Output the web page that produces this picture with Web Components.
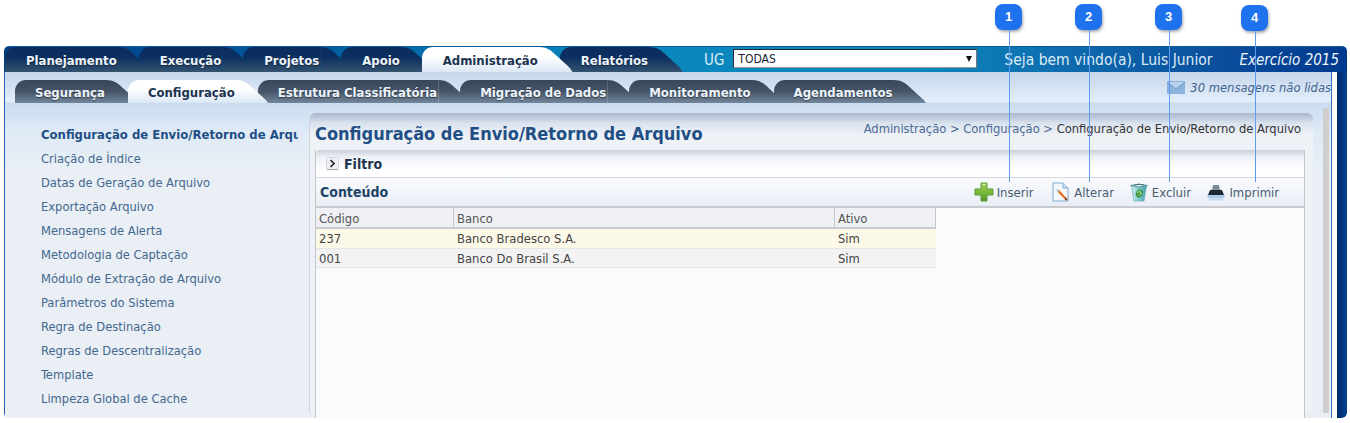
<!DOCTYPE html>
<html lang="pt-BR">
<head>
<meta charset="utf-8">
<title>Configuração de Envio/Retorno de Arquivo</title>
<style>
  html, body { margin: 0; background: #fff; overflow: hidden; }
  body {
    position: relative;
    width: 1350px;
    height: 423px;
    padding-top: 46px;
    box-sizing: border-box;
    font-family: "DejaVu Sans Condensed", "DejaVu Sans", sans-serif;
    font-stretch: condensed;
  }
</style>
</head>
<body>
<x-app>
  <x-tab-strip slot="main-tabs" kind="main">
    <x-tab>Planejamento</x-tab>
    <x-tab>Execução</x-tab>
    <x-tab>Projetos</x-tab>
    <x-tab>Apoio</x-tab>
    <x-tab active>Administração</x-tab>
    <x-tab>Relatórios</x-tab>
  </x-tab-strip>
  <x-user-info slot="user"></x-user-info>

  <x-tab-strip slot="sub-tabs" kind="sub">
    <x-tab>Segurança</x-tab>
    <x-tab active>Configuração</x-tab>
    <x-tab>Estrutura Classificatória</x-tab>
    <x-tab>Migração de Dados</x-tab>
    <x-tab>Monitoramento</x-tab>
    <x-tab>Agendamentos</x-tab>
  </x-tab-strip>
  <x-messages slot="messages">30 mensagens não lidas</x-messages>

  <x-side-menu slot="menu">
    <x-menu-item active>Configuração de Envio/Retorno de Arquivo</x-menu-item>
    <x-menu-item>Criação de Índice</x-menu-item>
    <x-menu-item>Datas de Geração de Arquivo</x-menu-item>
    <x-menu-item>Exportação Arquivo</x-menu-item>
    <x-menu-item>Mensagens de Alerta</x-menu-item>
    <x-menu-item>Metodologia de Captação</x-menu-item>
    <x-menu-item>Módulo de Extração de Arquivo</x-menu-item>
    <x-menu-item>Parâmetros do Sistema</x-menu-item>
    <x-menu-item>Regra de Destinação</x-menu-item>
    <x-menu-item>Regras de Descentralização</x-menu-item>
    <x-menu-item>Template</x-menu-item>
    <x-menu-item>Limpeza Global de Cache</x-menu-item>
  </x-side-menu>

  <x-content-panel slot="content" heading="Configuração de Envio/Retorno de Arquivo">
    <span slot="crumbs">Administração &gt; Configuração &gt; <b>Configuração de Envio/Retorno de Arquivo</b></span>
    <x-tool-button slot="tools" icon="plus">Inserir</x-tool-button>
    <x-tool-button slot="tools" icon="edit">Alterar</x-tool-button>
    <x-tool-button slot="tools" icon="trash">Excluir</x-tool-button>
    <x-tool-button slot="tools" icon="print">Imprimir</x-tool-button>
    <x-data-row kind="head"><span>Código</span><span>Banco</span><span>Ativo</span></x-data-row>
    <x-data-row kind="selected"><span>237</span><span>Banco Bradesco S.A.</span><span>Sim</span></x-data-row>
    <x-data-row kind="alt"><span>001</span><span>Banco Do Brasil S.A.</span><span>Sim</span></x-data-row>
  </x-content-panel>
</x-app>

<x-callout style="left:995px;top:4px" drop="152">1</x-callout>
<x-callout style="left:1075px;top:4px" drop="152">2</x-callout>
<x-callout style="left:1155px;top:4px" drop="152">3</x-callout>
<x-callout style="left:1241px;top:5px" drop="151">4</x-callout>

<script>
// Small helper: every element gets its own open shadow root
const shadow = (el, html) => {
  el.attachShadow({ mode: 'open' }).innerHTML = html
}

customElements.define('x-app', class extends HTMLElement {
  constructor () {
    super()
    shadow(this, `
      <style>
        :host { display: block; width: 1343px; height: 372px; margin-left: 4px; }
        #frame { height: 100%; display: flex; flex-direction: column; border-radius: 5px; overflow: hidden; }
        #top {
          flex: 0 0 26px; display: flex; padding-left: 1px;
          background: linear-gradient(90deg, #003f86 0%, #005a9e 22%, #0a87bd 45%, #0a87bd 68%, #0f6eaf 78%, #0a4a9a 92%, #003a8e 100%);
          border-top: 1px solid #0a5a9e; box-sizing: border-box;
        }
        #body { flex: 1; display: flex; min-height: 0; }
        #panel {
          flex: 0 0 1328px; display: flex; flex-direction: column; min-height: 0; box-sizing: border-box;
          border-left: 1px solid #2a64b4; border-right: 1px solid #3a74c8;
          background: linear-gradient(#c4d7ec 0, #e4eef9 30px, #c9dcf0 31px, #dfeaf6 60px, #e9eff5 100px);
        }
        #tabs { flex: 0 0 31px; display: flex; justify-content: space-between; box-sizing: border-box; padding: 8px 0 0 10px; }
        #work { flex: 1; display: flex; min-height: 0; }
        #side { flex: 0 0 auto; }
        #main { flex: 1; min-width: 0; }
        #gutter { flex: 0 0 5px; background: #fff; }
        #navy { flex: 0 0 10px; background: linear-gradient(90deg, #002a68, #00418f); border-bottom-right-radius: 5px; }
      </style>
      <div id="frame">
        <div id="top"><slot name="main-tabs"></slot><slot name="user"></slot></div>
        <div id="body">
          <div id="panel">
            <div id="tabs"><slot name="sub-tabs"></slot><slot name="messages"></slot></div>
            <div id="work">
              <div id="side"><slot name="menu"></slot></div>
              <div id="main"><slot name="content"></slot></div>
            </div>
          </div>
          <div id="gutter"></div>
          <div id="navy"></div>
        </div>
      </div>`)
  }
})

customElements.define('x-tab-strip', class extends HTMLElement {
  constructor () {
    super()
    shadow(this, `
      <style>
        :host { display: flex; align-items: flex-end; }
      </style>
      <slot></slot>`)
  }

  connectedCallback () {
    const tabs = [...this.children]
    tabs.forEach((tab, i) => {
      tab.setAttribute('kind', this.getAttribute('kind'))
      // Earlier tab lies over the next one, the active one over all
      tab.style.zIndex = tab.hasAttribute('active') ? 20 : 10 - i
    })
  }
})

customElements.define('x-tab', class extends HTMLElement {
  constructor () {
    super()
    shadow(this, `
      <style>
        :host {
          --tab-bg: linear-gradient(#0b2d5e, #0a2f60 40%, #35536f);
          --tab-fg: #eef4fb;
          display: block; position: relative; height: 25px;
          margin-right: -13px; font-weight: bold; font-size: 13px;
        }
        :host([kind=sub]) { --tab-bg: linear-gradient(#38465a, #465569 50%, #72869c); height: 23px; margin-right: -12px; }
        :host([active]) { --tab-bg: linear-gradient(#fff, #fff 40%, #dbe7f5); --tab-fg: #1c3350; }
        #shape { display: flex; height: 100%; }
        #face {
          background: var(--tab-bg); color: var(--tab-fg);
          padding: 0 1px 0 21px; line-height: 28px; border-top-left-radius: 11px;
          white-space: nowrap;
        }
        :host([kind=sub]) #face { line-height: 25px; padding-left: 20px; }
        :host(:not([active])) #face { text-shadow: 0 1px 1px rgba(0, 0, 0, .45); }
        #slope {
          width: 34px; background: var(--tab-bg);
          clip-path: path('M0 0 C8 0 12 3 17 8 L28 18 C31 21 33 23 34 26 L0 26 Z');
        }
      </style>
      <div id="shape"><div id="face"><slot></slot></div><div id="slope"></div></div>`)
  }
})

customElements.define('x-user-info', class extends HTMLElement {
  constructor () {
    super()
    shadow(this, `
      <style>
        :host { display: flex; align-items: center; flex: 1; height: 25px; position: relative; z-index: 30; color: #dcebf8; white-space: nowrap; }
        #ug { position: relative; font-size: 15px; margin-left: 34px; }
        #select {
          width: 244px; height: 19px; margin-left: 9px; margin-top: -2px; box-sizing: border-box; background: #fff;
          border: 1px solid #2b2b2b; border-right-color: #777; border-bottom-color: #999;
          display: flex; justify-content: space-between; align-items: center; padding: 0 4px;
          color: #223; font-size: 12px;
        }
        #arrow { width: 0; height: 0; border: 3.5px solid transparent; border-top: 6px solid #111; border-bottom: 0; }
        #hello { font-size: 15.5px; margin-left: 27px; }
        #year { font-size: 15px; font-style: italic; margin-left: auto; margin-right: 8px; color: #eef5fc; }
      </style>
      <span id="ug">UG</span>
      <div id="select"><span>TODAS</span><span id="arrow"></span></div>
      <span id="hello">Seja bem vindo(a), Luis Junior</span>
      <span id="year">Exercício 2015</span>`)
  }
})

customElements.define('x-messages', class extends HTMLElement {
  constructor () {
    super()
    shadow(this, `
      <style>
        :host { display: flex; align-items: center; gap: 5px; height: 15px; font-size: 12.85px; font-style: italic; color: #43648f; white-space: nowrap; overflow: hidden; }
        svg { flex: none; }
      </style>
      <svg width="18" height="13" viewBox="0 0 18 13">
        <rect width="18" height="13" rx="1" fill="#8db3dc"/>
        <path d="M0 1 L9 8 L18 1" fill="#b9d2ec" stroke="#6d99c9"/>
      </svg>
      <span><slot></slot></span>`)
  }
})

customElements.define('x-side-menu', class extends HTMLElement {
  constructor () {
    super()
    shadow(this, `
      <style>
        :host { display: block; width: 304px; box-sizing: border-box; padding: 20px 11px 0 36px; overflow: hidden; }
      </style>
      <slot></slot>`)
  }
})

customElements.define('x-menu-item', class extends HTMLElement {
  constructor () {
    super()
    shadow(this, `
      <style>
        :host { display: block; height: 24px; line-height: 24px; font-size: 12.8px; color: #44688f; white-space: nowrap; overflow: hidden; }
        :host([active]) { font-weight: bold; color: #1f4f85; font-size: 13px; }
      </style>
      <slot></slot>`)
  }
})

customElements.define('x-content-panel', class extends HTMLElement {
  constructor () {
    super()
    const heading = this.getAttribute('heading')
    shadow(this, `
      <style>
        :host { display: block; height: 100%; box-sizing: border-box; padding-top: 10px; position: relative; }
        /* the grey shadow strip on the right of the work area */
        #shade {
          height: 100%; box-sizing: border-box; padding-right: 10px;
          margin-top: -5px; padding-top: 5px;
          border-right: 6px solid #9a9a9a; margin-right: 2px;
          border-image: linear-gradient(90deg, #b8b8b8, #8a8a8a 60%, #cfcfcf) 6;
        }
        #card {
          height: 100%; box-sizing: border-box; padding: 0 8px 0 5px;
          border-top-left-radius: 6px; border-top-right-radius: 6px;
          background: linear-gradient(#a9b7cd 0, #d9e2ee 10px, #eef2f7 22px);
          border-left: 1px solid #d0d6de;
        }
        #title { display: flex; justify-content: space-between; height: 37px; padding-right: 4px; }
        h1 { margin: 0; font-size: 18px; line-height: 41px; color: #1f4f85; white-space: nowrap; }
        #crumbs { font-size: 12.8px; line-height: 32px; color: #4b6a94; white-space: nowrap; }
        #box { border: 1px solid #c0c4c9; border-width: 0 1px; height: 100%; background: #fafbfd; }
        #filter {
          height: 28px; display: flex; align-items: center; gap: 5px; padding-left: 10px; box-sizing: border-box;
          background: linear-gradient(#c8d0dc, #eef1f6 7px, #fff 20px);
          border-bottom: 1px solid #d5d8dc; font-weight: bold; font-size: 14px; color: #23364f;
          border-top-left-radius: 4px;
        }
        #chev {
          width: 13px; height: 13px; box-sizing: border-box; border: 1px solid #d4d8de; border-bottom-color: #9aa2ac; border-radius: 2px;
          background: #eef0f3; display: flex; align-items: center; justify-content: center;
        }
        #bar {
          height: 30px; display: flex; align-items: center; justify-content: space-between; box-sizing: border-box;
          background: linear-gradient(#f9fbfd, #e9eef6); border-bottom: 2px solid #c9cbce;
          padding: 0 20px 0 4px;
        }
        #bar b { font-size: 14px; color: #1d4468; }
        #tools { display: flex; }
        #grid { width: 620px; }
      </style>
      <div id="shade">
        <div id="card">
          <div id="title"><h1>${heading}</h1><div id="crumbs"><slot name="crumbs"></slot></div></div>
          <div id="box">
            <div id="filter">
              <span id="chev"><svg width="7" height="9" viewBox="0 0 7 9"><path d="M1.5 1 L5 4.5 L1.5 8" fill="none" stroke="#222" stroke-width="1.6"/></svg></span>
              <span>Filtro</span>
            </div>
            <div id="bar"><b>Conteúdo</b><div id="tools"><slot name="tools"></slot></div></div>
            <div id="grid"><slot></slot></div>
          </div>
        </div>
      </div>`)
  }

  connectedCallback () {
    // Breadcrumb tail is darker than its links
    const last = this.querySelector('[slot=crumbs] b')
    last.style.fontWeight = 'normal'
    last.style.color = '#333'
  }
})

const TOOL_ICONS = {
  plus: `<svg width="20" height="20" viewBox="0 0 20 20">
    <defs><linearGradient id="g" x1="0" y1="0" x2="0" y2="1"><stop offset="0" stop-color="#a6d65a"/><stop offset="1" stop-color="#4f9a1e"/></linearGradient></defs>
    <path d="M7 1 H13 V7 H19 V13 H13 V19 H7 V13 H1 V7 H7 Z" fill="url(#g)" stroke="#5f9a3a" stroke-linejoin="round"/>
    <path d="M8 2.5 H12" stroke="#d4efa6" stroke-width="1.2"/></svg>`,
  edit: `<svg width="20" height="20" viewBox="0 0 20 20">
    <path d="M2 1 H12 L17 6 V19 H2 Z" fill="#f4f8fc" stroke="#7fa8cf"/>
    <path d="M12 1 V6 H17" fill="#cfe0f0" stroke="#7fa8cf"/>
    <path d="M7.5 9 L14 16" stroke="#ea6f1f" stroke-width="2.4"/>
    <path d="M7.5 9 L6 7.4" stroke="#9cc0dd" stroke-width="2.2"/>
    <path d="M14 16 L16 18" stroke="#8a3a14" stroke-width="2"/></svg>`,
  trash: `<svg width="20" height="20" viewBox="0 0 20 20">
    <defs><linearGradient id="t" x1="0" y1="0" x2="1" y2="0"><stop offset="0" stop-color="#d7f0f2"/><stop offset=".5" stop-color="#7cc6cf"/><stop offset="1" stop-color="#4e9fae"/></linearGradient></defs>
    <path d="M2.5 4 H17.5 L15 19 H5 Z" fill="url(#t)" stroke="#6fb1bc" stroke-width=".7"/>
    <path d="M1.5 3.5 Q10 .6 18.5 3.5 Q10 6.4 1.5 3.5 Z" fill="#eef8f9" stroke="#3f7e8c" stroke-width=".8"/>
    <path d="M5 3.2 Q10 1.6 15 3" fill="none" stroke="#3f6f7c" stroke-width="1"/>
    <path d="M7 10 L10 7 L14 9 L13 14 L9 16 L6.5 13 Z" fill="#3f9a3a"/>
    <path d="M8 11 L10.5 9 L12 11.5 L10 13.5" stroke="#cfeec8" stroke-width="1" fill="none"/></svg>`,
  print: `<svg width="20" height="20" viewBox="0 0 20 20">
    <path d="M7 3 H13 L14 8 H6 Z" fill="#7d8c9c"/>
    <path d="M4 8 H16 L18 13 H2 Z" fill="#1e2732"/>
    <path d="M1 13 H19 L18 16 H2 Z" fill="#a9c9e8"/>
    <path d="M4 16 H16 L17 18 H3 Z" fill="#d9e8f6" stroke="#a4c3e0" stroke-width=".6"/></svg>`
}

customElements.define('x-tool-button', class extends HTMLElement {
  constructor () {
    super()
    shadow(this, `
      <style>
        :host { display: flex; align-items: center; gap: 3px; width: 77.6px; font-size: 13px; color: #4a5c72; white-space: nowrap; }
        svg { display: block; }
      </style>
      ${TOOL_ICONS[this.getAttribute('icon')]}
      <span><slot></slot></span>`)
  }
})

customElements.define('x-data-row', class extends HTMLElement {
  constructor () {
    super()
    shadow(this, `
      <style>
        :host {
          display: grid; grid-template-columns: 138px 381px 101px; height: 19.5px; align-items: start; padding-top: 2px;
          font-size: 12.9px; color: #444; box-sizing: border-box; border-bottom: 1px solid #e6e6e6;
        }
        :host([kind=head]) { height: 21px; background: #eef0f3; color: #555; border-bottom: 2px solid #c9cbce; padding-top: 0; }
        :host([kind=selected]) { background: #fdf9e8; }
        :host([kind=alt]) { background: #f3f3f3; }
        ::slotted(span) { padding-left: 3px; line-height: 16px; }
        :host([kind=head]) ::slotted(span) { border-right: 1px solid #c4c7cb; height: 19px; line-height: 21px; }
      </style>
      <slot></slot>`)
  }
})

customElements.define('x-callout', class extends HTMLElement {
  constructor () {
    super()
    const drop = this.getAttribute('drop')
    shadow(this, `
      <style>
        :host {
          position: absolute; display: block; width: 27px; height: 26px; border-radius: 8px; z-index: 50;
          background: #1f72ee; color: #fff; font: bold 13px/26px "Liberation Sans", sans-serif; text-align: center;
          box-shadow: 1px 2px 3px rgba(60, 70, 90, .45);
        }
        #line { position: absolute; left: 14px; top: 26px; width: 1px; height: ${drop}px; background: #5c9bf0; }
      </style>
      <slot></slot><div id="line"></div>`)
  }
})
</script>
</body>
</html>
